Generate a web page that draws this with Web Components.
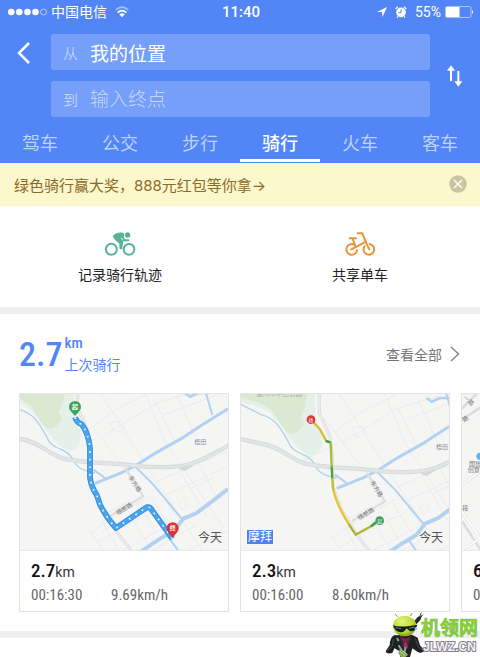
<!DOCTYPE html>
<html lang="zh-CN">
<head>
<meta charset="UTF-8">
<meta name="viewport" content="width=device-width, initial-scale=1">
<title>骑行</title>
<style>
  :root {
    --blue: #5286f7;
    --field: #769ffa;
    --narrow: "Roboto Condensed", "Liberation Sans Narrow", Roboto, sans-serif;
  }
  body {
    margin: 0;
    background: #fff;
    font-family: Roboto, "Noto Sans CJK SC", sans-serif;
    color: #222;
  }
</style>
</head>
<body>
<ride-app></ride-app>

<script>
class StatusBar extends HTMLElement {
  constructor() {
    super();
    this.attachShadow({ mode: 'open' });
  }

  connectedCallback() {
    this.shadowRoot.innerHTML = `
      <style>
        :host {
          display: grid;
          grid-template-columns: 1fr auto 1fr;
          align-items: center;
          height: 24px;
          padding: 0 6px 0 8px;
          color: #fff;
          font-size: 14px;
          line-height: 24px;
        }
        div { display: flex; align-items: center; }
        .left { gap: 8px; }
        .carrier { display: flex; align-items: center; gap: 4px; }
        .right { justify-content: flex-end; gap: 4px; }
        .alarm { margin: 0 4px; }
        b { font-weight: 500; font-size: 15px; }
        svg { display: block; }
      </style>
      <div class="left">
        <span class="carrier">
          <svg width="39" height="8" viewBox="0 0 39 8" fill="#fff">
            <circle cx="3.300" cy="4" r="3.300"/><circle cx="11.300" cy="4" r="3.300"/>
            <circle cx="19.500" cy="4" r="3.300"/><circle cx="27.500" cy="4" r="3.300"/>
            <circle cx="35.500" cy="4" r="3" fill="none" stroke="#c3d6ff" stroke-width=".8"/>
          </svg>
          <span>中国电信</span>
        </span>
        <svg width="14" height="12" viewBox="0 0 42 36" fill="none" stroke-width="5">
          <path d="M2 12Q21 -5 40 12" stroke="#a4c0fb"/>
          <path d="M8 20Q21 8 34 20" stroke="#fff"/>
          <path d="M13 25Q21 18 29 25L21 34Z" fill="#fff"/>
        </svg>
      </div>
      <b>11:40</b>
      <div class="right">
        <svg width="10" height="10" viewBox="0 0 10 10"><path d="M0 5L10 0L5.500 10L5 5Z" fill="#fff"/></svg>
        <svg class="alarm" width="12" height="12" viewBox="0 0 36 36" fill="none">
          <circle cx="18" cy="19" r="14.500" fill="#fff"/>
          <path d="M18 10V20H10" stroke="#5286f7" stroke-width="3"/>
          <path d="M2 9L9 2M34 9L27 2M9 31L6 35M27 31L30 35" stroke="#fff" stroke-width="3.500"/>
        </svg>
        <span>55%</span>
        <svg width="29" height="12" viewBox="0 0 29 12">
          <rect x=".5" y=".5" width="25.500" height="11" rx="1.500" fill="none" stroke="#a9c3fc"/>
          <rect x="1" y="1" width="13.500" height="10" fill="#fff"/>
          <path d="M27 4Q29 6 27 8Z" fill="#fff"/>
        </svg>
      </div>
    `;
  }
}

class RouteField extends HTMLElement {
  constructor() {
    super();
    this.attachShadow({ mode: 'open' });
  }

  connectedCallback() {
    this.shadowRoot.innerHTML = `
      <style>
        :host {
          display: flex;
          align-items: center;
          height: 36px;
          padding-left: 12px;
          border-radius: 3px;
          background: var(--field);
        }
        label { flex: none; width: 27px; font-size: 15px; font-weight: 300; color: #d3e0fe; }
        input {
          flex: 1;
          min-width: 0;
          height: 36px;
          padding: 0;
          border: 0;
          outline: 0;
          background: none;
          font: inherit;
          font-size: 19px;
          color: #fff;
        }
        input::placeholder { color: #c5d7fe; opacity: 1; font-weight: 300; }
      </style>
      <label for="place">${this.getAttribute('label')}</label>
      <input id="place" type="text" value="${this.getAttribute('value') || ''}" placeholder="${this.getAttribute('placeholder') || ''}">
    `;
  }
}

class RouteForm extends HTMLElement {
  constructor() {
    super();
    this.attachShadow({ mode: 'open' });
  }

  connectedCallback() {
    this.shadowRoot.innerHTML = `
      <style>
        :host {
          display: grid;
          grid-template-columns: 51px 1fr 50px;
          padding: 10px 0 9px;
        }
        .fields { display: grid; gap: 11px; }
        button {
          display: flex;
          align-items: center;
          justify-content: center;
          padding: 0;
          border: 0;
          background: none;
        }
        .back { height: 38px; padding-right: 3px; }
        svg { display: block; fill: none; stroke: #fff; }
      </style>
      <button class="back" aria-label="返回">
        <svg width="14" height="22" viewBox="0 0 14 22" stroke-width="2.500"><path d="M12 1L2 11L12 21"/></svg>
      </button>
      <div class="fields">
        <route-field label="从" value="我的位置"></route-field>
        <route-field label="到" placeholder="输入终点"></route-field>
      </div>
      <button aria-label="交换起终点">
        <svg width="18" height="24" viewBox="618 191 54 72" stroke-width="6">
          <path d="M633 242V204M655 212V252"/>
          <path d="M621 211L633 195L645 211ZM643 243L655 259L667 243Z" fill="#fff" stroke="none"/>
        </svg>
      </button>
    `;
  }
}

class ModeTabs extends HTMLElement {
  constructor() {
    super();
    this.attachShadow({ mode: 'open' });
  }

  connectedCallback() {
    const modes = ['驾车', '公交', '步行', '骑行', '火车', '客车'];
    const current = '骑行';
    this.shadowRoot.innerHTML = `
      <style>
        :host { display: block; }
        nav { display: grid; grid-template-columns: repeat(6, 1fr); }
        a {
          height: 33px;
          border-bottom: 3px solid transparent;
          color: #bed2fe;
          font-size: 18px;
          line-height: 36px;
          text-align: center;
          text-decoration: none;
        }
        a[aria-current] { color: #fff; border-color: #fff; font-weight: 500; }
      </style>
      <nav>
        ${modes.map(m => `<a href="#"${m === current ? ' aria-current="page"' : ''}>${m}</a>`).join('')}
      </nav>
    `;
  }
}

class PromoNotice extends HTMLElement {
  constructor() {
    super();
    this.attachShadow({ mode: 'open' });
  }

  connectedCallback() {
    this.shadowRoot.innerHTML = `
      <style>
        :host {
          display: flex;
          align-items: center;
          justify-content: space-between;
          height: 42px;
          padding: 0 13px 0 14px;
          background: #fcf8cd;
          border-bottom: 1px solid #faf0c4;
        }
        a { color: #8c6a28; font-family: Inter, "Noto Sans CJK SC", sans-serif; font-size: 15px; text-decoration: none; }
        button { padding: 0; border: 0; background: none; }
        svg { display: block; }
      </style>
      <a href="#"><slot></slot></a>
      <button aria-label="关闭">
        <svg width="18" height="18" viewBox="0 0 18 18">
          <circle cx="9" cy="9" r="8.700" fill="#c9c5a4"/>
          <path d="M5 5L13 13M13 5L5 13" stroke="#fffbe2" stroke-width="1.600"/>
        </svg>
      </button>
    `;
  }
}

class QuickActions extends HTMLElement {
  constructor() {
    super();
    this.attachShadow({ mode: 'open' });
  }

  connectedCallback() {
    this.shadowRoot.innerHTML = `
      <style>
        :host {
          display: grid;
          grid-template-columns: 1fr 1fr;
          padding: 25px 0 20px;
          border-bottom: 7px solid #efefef;
        }
        a {
          display: grid;
          justify-items: center;
          gap: 6px;
          color: #222;
          font-size: 14px;
          line-height: 24px;
          text-decoration: none;
        }
        svg { display: block; fill: none; stroke-linecap: round; stroke-linejoin: round; }
      </style>
      <a href="#">
        <svg width="32" height="26" viewBox="132 34 96 78" stroke="#55b592" stroke-width="6">
          <circle cx="154" cy="89" r="16.500"/><circle cx="207" cy="89" r="16"/>
          <circle cx="203" cy="46" r="8" fill="#55b592" stroke="none"/>
          <path d="M161 50Q172 39 189 42L191 46L180 56L187 65Q186 76 184 86H181L180 70L168 60Z" fill="#55b592" stroke-width="5"/>
          <path d="M187 46L192 62H205"/>
        </svg>
        <span>记录骑行轨迹</span>
      </a>
      <a href="#">
        <svg width="32" height="26" viewBox="852 34 96 78" stroke="#e79435" stroke-width="6">
          <path d="M884 76A16 16 0 1 0 891 92M914 79A16 16 0 1 0 929 73"/>
          <path d="M893 41H907L919 71L928 89M869 56H888M878 57L885 78M874 89L918 66"/>
        </svg>
        <span>共享单车</span>
      </a>
    `;
  }
}

/* Shared street layer of the route thumbnails, three map units to a pixel */
const streets = `
  <path d="M-60 -20H190V80Q218 120 212 160Q195 190 172 187Q145 177 110 130Q75 65 28 45L-60 20Z" fill="#e5f1e8"/>
  <path d="M-60 -20H167L161 40L146 72L158 92Q138 122 120 122Q100 120 85 90L60 52L28 32L-60 5Z" fill="#dbe9d3"/>
  <g fill="none" stroke="#e7e7ea" stroke-width="2">
    <path d="M215 75L345 240M255 -10L420 250L575 486M250 115L325 60L435 5M270 150L440 45L560 10M395 -10L460 150L640 420M460 80L654 10M435 40L495 160M500 20L555 145M560 215L620 330M510 250L590 385M440 280L654 190M470 320L654 235M545 300L610 270M300 105L335 100L345 120L315 134Z"/>
    <path d="M240 435L330 375L430 320M270 460L370 400L460 360M340 486L500 400M370 520L560 410M240 430L280 486M275 395L325 486M340 345L415 470M380 330L440 440M425 330L480 420M450 310L510 400M280 380L350 345M505 345L520 330L535 350L515 365ZM275 430L310 410L330 440M150 205L230 165L260 150M535 486L654 430"/>
  </g>
  <g fill="none" stroke="#b3d1f1" stroke-linejoin="round">
    <path d="M-60 20L28 65C75 75 95 120 112 150Q118 170 150 183Q180 193 192 220T255 255" stroke-width="4"/>
    <path d="M255 286L330 256L375 234L440 193L520 148L570 115L654 62" stroke-width="9"/>
    <path d="M250 245L285 270M375 235L430 290L515 392M470 440L510 495M580 -10L607 80" stroke-width="6"/>
    <path d="M525 15L540 26L565 15H600" stroke-width="8"/>
    <path d="M654 303L610 337L560 375L520 392L495 425L450 452L350 520" stroke-width="12"/>
  </g>
  <g fill="none" stroke-linejoin="round">
    <path d="M203 -20V60L235 130L243 200V280L270 350L315 425L365 490" stroke="#d9dbdd" stroke-width="9"/>
    <path d="M203 -20V60L235 130L243 200V280L270 350L315 425L365 490" stroke="#ececee" stroke-width="5"/>
    <path d="M345 240L365 270L400 325L300 385" stroke="#dedfe0" stroke-width="7"/>
    <path d="M-60 132L28 152C80 158 120 200 160 212C220 225 300 225 370 232C430 240 500 240 540 228C580 218 620 190 690 155M510 238L525 242L550 225" stroke="#d5d9da" stroke-width="13"/>
    <path d="M-60 132L28 152C80 158 120 200 160 212C220 225 300 225 370 232C430 240 500 240 540 228C580 218 620 190 690 155" stroke="#e2e5e5" stroke-width="8"/>
  </g>
  <g font-size="18" fill="#777">
    <text x="553" y="168" fill="#8a93a3">梧田</text>
    <text transform="translate(355 268) rotate(58)">东方路</text>
    <text transform="translate(323 382) rotate(-32)">梧慈路</text>
  </g>`;

const walked = 'M195 88Q200 103 215 109Q235 135 240 180V270Q245 300 260 320L270 350Q290 390 318 420L410 358Q420 355 427 368L487 452';

const maps = {
  walk: `
    <svg viewBox="30 18 624 468">
      ${streets}
      <g fill="none" stroke-linejoin="round">
        <path d="${walked}" stroke="#2f83c9" stroke-width="17"/>
        <path d="${walked}" stroke="#48a5ef" stroke-width="13"/>
        <path d="${walked}" stroke="#eaf6ff" stroke-width="5" stroke-dasharray="5 18"/>
      </g>
      <path d="M195 84L181 68A18 18 0 1 1 209 68Z" fill="#41a35c"/>
      <path d="M488 449L474 432A18 18 0 1 1 502 432Z" fill="#d9342f"/>
      <g font-size="18" font-weight="700" fill="#fff" text-anchor="middle">
        <text x="195" y="63">起</text><text x="488" y="427">终</text>
      </g>
    </svg>`,
  bike: `
    <svg viewBox="18 18 624 468">
      <g transform="translate(50 15)">${streets}</g>
      <text x="62" y="25" font-size="20" fill="#aab5aa">温州市中田公园</text>
      <g fill="none" stroke-width="7" stroke-linejoin="round">
        <path d="M228 95L254 123L274 159" stroke="#d6bd2f"/>
        <path d="M272 159L287 163" stroke="#389a43"/>
        <path d="M287 163L290 235" stroke="#a4bf36"/>
        <path d="M290 235L292 272" stroke="#4ba642"/>
        <path d="M292 270L295 308" stroke="#b9c336"/>
        <path d="M295 305Q305 350 342 410" stroke="#e3c52d"/>
        <path d="M341 408L362 440L408 415L420 403" stroke="#a7b82e"/>
        <path d="M408 415L432 398" stroke="#3c9c49"/>
      </g>
      <circle cx="228" cy="95" r="13" fill="#dc3535"/>
      <circle cx="434" cy="398" r="13" fill="#3aa35b"/>
      <g font-size="15" fill="#fff" text-anchor="middle">
        <text x="228" y="101">终</text><text x="434" y="404">起</text>
      </g>
    </svg>`,
  edge: `
    <svg viewBox="684 18 624 468">
      <path d="M684 62L740 5M684 95L740 58M684 290L740 250M684 370L740 455M684 400L740 486M684 486L740 450" fill="none" stroke="#dcddde" stroke-width="8"/>
      <path d="M684 290L740 250M684 370L740 455M684 486L740 450" fill="none" stroke="#fff" stroke-width="5"/>
      <circle cx="738" cy="205" r="11" fill="#62b4ee"/>
      <g font-size="18" fill="#777">
        <text x="705" y="234">国智</text><text x="701" y="252">创意</text>
        <text x="685" y="366">段</text>
        <text transform="translate(686 31) rotate(40)">一路</text>
        <text transform="translate(690 103) rotate(-35)">路</text>
      </g>
    </svg>`
};

class RideCard extends HTMLElement {
  constructor() {
    super();
    this.attachShadow({ mode: 'open' });
  }

  connectedCallback() {
    const get = name => this.getAttribute(name) || '';
    this.shadowRoot.innerHTML = `
      <style>
        :host {
          display: block;
          flex: 0 0 208px;
          border: 1px solid #e4e4e4;
          background: #fff;
        }
        .map {
          position: relative;
          background: #f5f5f4;
          border-bottom: 1px solid #e9e9e9;
        }
        svg { display: block; width: 100%; }
        .day, .brand { position: absolute; bottom: 4px; line-height: 16px; }
        .day { right: 6px; font-size: 12px; color: #555; }
        .brand {
          left: 6px;
          bottom: 6px;
          padding: 0 1px;
          background: #4d83ea;
          color: #fff;
          font-size: 12px;
          line-height: 14px;
        }
        .brand:empty, .day:empty { display: none; }
        .info { padding: 6px 11px 2px; font-family: var(--narrow); }
        .distance { height: 28px; font-size: 19px; line-height: 28px; font-weight: 500; color: #111; }
        small { font: 14px Roboto, sans-serif; color: #333; }
        .stats {
          display: grid;
          grid-template-columns: 80px 1fr;
          height: 24px;
          font-size: 15px;
          line-height: 20px;
          color: #666;
        }
      </style>
      <div class="map">
        ${maps[get('map')]}
        <span class="brand">${get('brand')}</span>
        <span class="day">${get('day')}</span>
      </div>
      <div class="info">
        <div class="distance">${get('distance')}<small>${get('unit')}</small></div>
        <div class="stats"><span>${get('time')}</span><span>${get('speed')}</span></div>
      </div>
    `;
  }
}

class RideHistory extends HTMLElement {
  constructor() {
    super();
    this.attachShadow({ mode: 'open' });
  }

  connectedCallback() {
    this.shadowRoot.innerHTML = `
      <style>
        :host { display: block; border-bottom: 7px solid #efefef; }
        header {
          display: flex;
          align-items: center;
          height: 79px;
          padding: 0 20px 0 19px;
        }
        .total { font: 500 34px/48px var(--narrow); color: var(--blue); }
        .caption { flex: 1; padding-left: 2px; font-size: 14px; line-height: 22px; color: var(--blue); }
        .caption b { display: block; font: 500 15px/22px var(--narrow); }
        a {
          display: flex;
          align-items: center;
          gap: 8px;
          color: #777;
          font-size: 14px;
          text-decoration: none;
        }
        .rides {
          display: flex;
          gap: 11px;
          padding: 0 0 19px 19px;
          overflow: hidden;
        }
      </style>
      <header>
        <span class="total">2.7</span>
        <span class="caption"><b>km</b>上次骑行</span>
        <a href="#">查看全部
          <svg width="10" height="16" viewBox="0 0 10 16" fill="none" stroke="#888" stroke-width="1.500"><path d="M1 1L8.500 8L1 15"/></svg>
        </a>
      </header>
      <div class="rides">
        <ride-card map="walk" day="今天" distance="2.7" unit="km" time="00:16:30" speed="9.69km/h"></ride-card>
        <ride-card map="bike" day="今天" brand="摩拜" distance="2.3" unit="km" time="00:16:00" speed="8.60km/h"></ride-card>
        <ride-card map="edge" distance="6" time="0"></ride-card>
      </div>
    `;
  }
}

class SiteMark extends HTMLElement {
  constructor() {
    super();
    this.attachShadow({ mode: 'open' });
  }

  connectedCallback() {
    this.shadowRoot.innerHTML = `
      <style>
        :host {
          position: absolute;
          right: 2px;
          bottom: 0;
          display: flex;
          align-items: flex-end;
        }
        svg { display: block; margin-right: -6px; }
        .name { display: grid; justify-items: center; padding-bottom: 3px; paint-order: stroke fill; }
        .cn { font-size: 19px; line-height: 22px; font-weight: 500; color: #7fd424; -webkit-text-stroke: 1px #8fb573; }
        .en { font: 700 12px/14px "Liberation Sans", sans-serif; color: #f3effa; -webkit-text-stroke: 2px #85818c; }
      </style>
      <svg width="42" height="45" viewBox="0 0 126 135">
        <defs>
          <radialGradient id="head" cx=".4" cy=".3" r=".8">
            <stop offset="0" stop-color="#e6f77a"/><stop offset=".6" stop-color="#b4d92c"/><stop offset="1" stop-color="#7fa51b"/>
          </radialGradient>
        </defs>
        <path d="M82 34L98 15L111 10L106 24L91 40Z" fill="#252525"/>
        <path d="M104 14L109 2M107 15L114 8" stroke="#444" stroke-width="3"/>
        <path d="M27 70Q15 77 14 100L2 117Q3 127 22 123L28 109L43 117L46 135H75L82 109L97 119Q107 126 119 117L105 100L98 77L81 68Z" fill="#202123"/>
        <path d="M25 82L22 102L5 117M91 80L99 103L115 116" fill="none" stroke="#4c4c4f" stroke-width="3"/>
        <path d="M44 70L62 84L80 70L69 103H53Z" fill="#34363a"/>
        <path d="M51 76L62 80L72 76L70 88L62 84L54 89Z" fill="#a40f50"/>
        <path d="M61 84L69 105L60 114L55 103Z" fill="#c31c62"/>
        <path d="M41 87L36 78M41 100L52 118M62 105L57 125" stroke="#8ba39b" stroke-width="6"/>
        <path d="M44 112L60 119L69 129L61 135H48L40 124Z" fill="#8eaa58"/>
        <path d="M45 117L61 132M54 117L67 127" stroke="#d6dfbd" stroke-width="2"/>
        <path d="M38 15L30 5M76 12L82 3" stroke="#88aa21" stroke-width="3"/>
        <ellipse cx="59" cy="42" rx="35" ry="31" fill="url(#head)"/>
        <path d="M24 40Q44 48 97 38L93 48Q87 61 75 57L64 49Q57 64 43 60Q29 57 24 40Z" fill="#141922"/>
        <path d="M31 47L49 50M72 49L89 45" stroke="#777f89" stroke-width="3"/>
        <circle cx="93" cy="50" r="4" fill="#75ddf6"/>
        <path d="M40 64Q56 75 78 63" fill="none" stroke="#708f20" stroke-width="2"/>
      </svg>
      <div class="name"><span class="cn">机领网</span><span class="en">JLWZ.CN</span></div>
    `;
  }
}

class RideApp extends HTMLElement {
  constructor() {
    super();
    this.attachShadow({ mode: 'open' });
  }

  connectedCallback() {
    this.shadowRoot.innerHTML = `
      <style>
        :host {
          display: block;
          position: relative;
          box-sizing: border-box;
          min-height: 100vh;
          overflow: hidden;
        }
        .top { background: var(--blue); padding-bottom: 1px; }
      </style>
      <div class="top">
        <status-bar></status-bar>
        <route-form></route-form>
        <mode-tabs></mode-tabs>
      </div>
      <promo-notice>绿色骑行赢大奖，888元红包等你拿→</promo-notice>
      <quick-actions></quick-actions>
      <ride-history></ride-history>
      <site-mark></site-mark>
    `;
  }
}

customElements.define('status-bar', StatusBar);
customElements.define('route-field', RouteField);
customElements.define('route-form', RouteForm);
customElements.define('mode-tabs', ModeTabs);
customElements.define('promo-notice', PromoNotice);
customElements.define('quick-actions', QuickActions);
customElements.define('ride-card', RideCard);
customElements.define('ride-history', RideHistory);
customElements.define('site-mark', SiteMark);
customElements.define('ride-app', RideApp);
</script>
</body>
</html>
